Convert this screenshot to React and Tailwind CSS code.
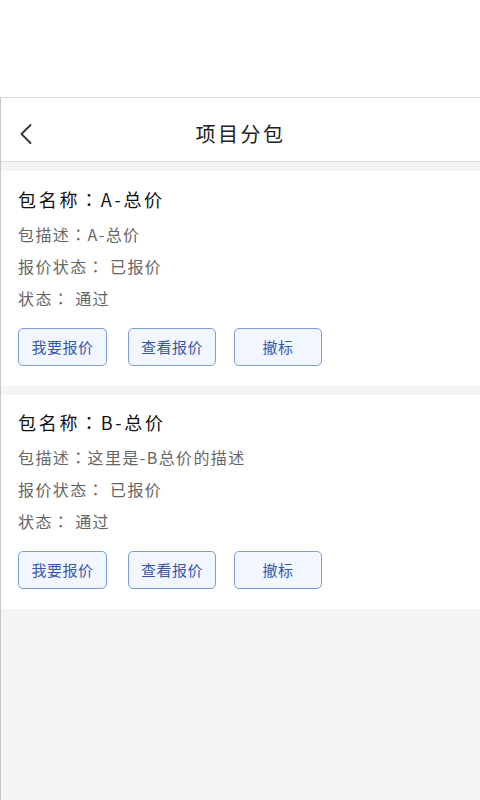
import React from "react";

const font = { fontFamily: '"Noto Sans CJK SC", "Noto Sans", sans-serif' };
const tc = { fontFamily: '"Noto Sans CJK TC", "Noto Sans CJK SC", sans-serif' };

function Colon() {
  return <span style={tc}>：</span>;
}

function Btn({ children, className = "" }) {
  return (
    <div
      className={
        "h-[38px] flex items-center justify-center rounded-[5px] border border-[#7f9ed8] bg-[#f1f6ff] text-[15px] tracking-[0.5px] text-[#3558ad] " +
        className
      }
    >
      {children}
    </div>
  );
}

function Card({ name, desc, className = "" }) {
  return (
    <div className={"bg-white pl-[17px] " + className}>
      <div className="h-[28px] leading-[28px] text-[18px] tracking-[2.7px] text-[#111]">
        包名称<Colon />{name}
      </div>
      <div className="mt-[5px] h-[32px] leading-[32px] text-[16px] tracking-[1.4px] text-[#666]">
        包描述<Colon />{desc}
      </div>
      <div className="h-[32px] leading-[32px] text-[16px] tracking-[1.4px] text-[#666]">
        报价状态<Colon /> 已报价
      </div>
      <div className="h-[32px] leading-[32px] text-[16px] tracking-[1.4px] text-[#666]">
        状态<Colon /> 通过
      </div>
      <div className="mt-[14px] flex">
        <Btn className="w-[89px]">我要报价</Btn>
        <Btn className="w-[88px] ml-[21px]">查看报价</Btn>
        <Btn className="w-[88px] ml-[18px]">撤标</Btn>
      </div>
    </div>
  );
}

export default function App() {
  return (
    <div style={font} className="w-[480px] h-[800px] bg-white flex flex-col overflow-hidden">
      <div className="h-[97px] shrink-0 bg-white" />
      <div className="flex-1 flex flex-col border-t border-l border-t-[#dcdcdc] border-l-[#c8c8c8] bg-[#f4f4f4]">
        <div className="relative h-[64px] shrink-0 bg-white border-b border-[#dcdcdc] pt-[8px] flex items-center justify-center">
          <svg
            className="absolute left-[17px] top-[25px]"
            width="16"
            height="22"
            viewBox="0 0 16 22"
            fill="none"
          >
            <path d="M12.5 2 L3.5 11 L12.5 20" stroke="#333" strokeWidth="1.8" strokeLinecap="round" strokeLinejoin="round" />
          </svg>
          <span className="text-[20px] tracking-[2.5px] text-[#222]">项目分包</span>
        </div>
        <Card name="A-总价" desc="A-总价" className="mt-[9px] pt-[14px] pb-[20px]" />
        <Card name="B-总价" desc="这里是-B总价的描述" className="mt-[9px] pt-[13px] pb-[20px]" />
      </div>
    </div>
  );
}
